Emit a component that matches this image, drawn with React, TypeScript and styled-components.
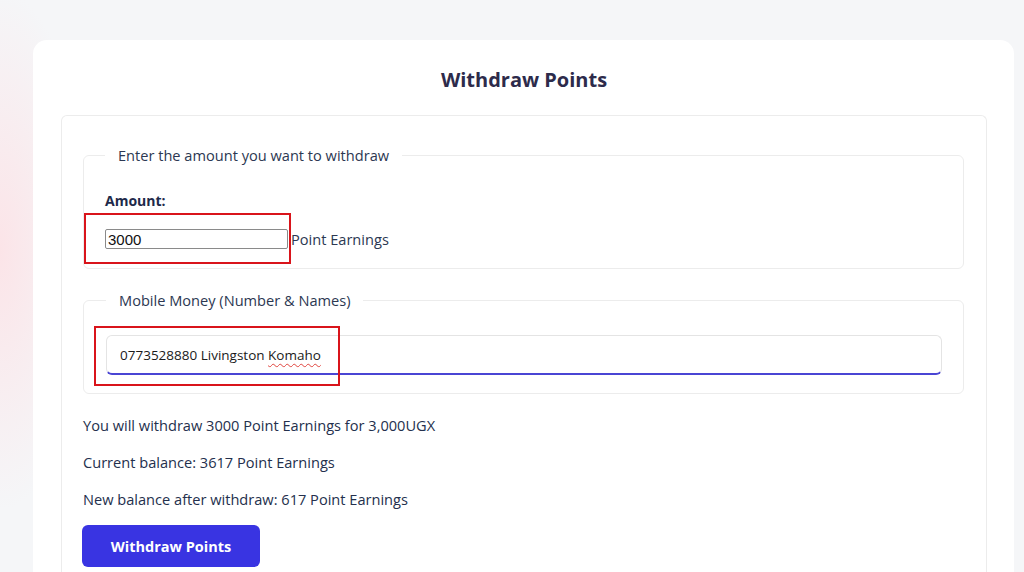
import React from "react";
import styled, { createGlobalStyle } from "styled-components";

const Global = createGlobalStyle`
  html, body { margin: 0; padding: 0; }
  body {
    background-color: #f5f6f8;
    background-image: radial-gradient(ellipse 90px 260px at 0px 250px, rgba(252, 226, 230, 0.9), rgba(245, 246, 248, 0) 100%);
    font-family: "Open Sans", "Noto Sans", sans-serif;
    color: #24304d;
    min-height: 572px;
    overflow: hidden;
  }
`;

const Page = styled.div`
  padding: 40px 10px 0 33px;
  height: 572px;
  box-sizing: border-box;
  overflow: hidden;
`;

const Card = styled.div`
  background: #ffffff;
  border-radius: 14px 14px 0 0;
  padding: 27px 27px 0 28px;
  height: 532px;
  box-sizing: border-box;
  overflow: hidden;
`;

const Title = styled.h2`
  margin: 0;
  text-align: center;
  font-size: 20px;
  font-weight: 700;
  line-height: 26px;
  color: #2d2b4b;
`;

const Panel = styled.div`
  margin-top: 22px;
  border: 1px solid #ececec;
  border-bottom: none;
  border-radius: 6px 6px 0 0;
  padding: 30px 22px 0 21px;
  height: 480px;
`;

const FieldSet = styled.fieldset<{ $gap?: number }>`
  margin: ${(p) => p.$gap ?? 0}px 0 0 0;
  border: 1px solid #ececec;
  border-radius: 6px;
  padding: ${(p) => (p.$gap ? "10px 21px 18px 22px" : "12px 21px 19px 21px")};
  min-width: 0;
`;

const Legend = styled.legend`
  padding: 0 13px;
  font-size: 14.6px;
  line-height: 18px;
  color: #2c3852;
`;

const Label = styled.div`
  font-size: 14px;
  font-weight: 700;
  color: #1e2a4a;
  line-height: 18px;
  margin-top: 16px;
`;

const Row = styled.div`
  display: flex;
  align-items: center;
  margin-top: 19px;
  position: relative;
`;

const NativeInput = styled.input`
  width: 183px;
  height: 20px;
  box-sizing: border-box;
  border: 1px solid #8a8a8a;
  border-radius: 2px;
  padding: 0 2px;
  font-family: "Liberation Sans", Arial, sans-serif;
  font-size: 15px;
  color: #111;
  background: #fff;
  outline: none;
`;

const Suffix = styled.span`
  font-size: 14.6px;
  color: #2c3852;
  margin-left: 3px;
`;

const Annotation = styled.div<{ $l: number; $t: number; $w: number; $h: number }>`
  position: absolute;
  left: ${(p) => p.$l}px;
  top: ${(p) => p.$t}px;
  width: ${(p) => p.$w}px;
  height: ${(p) => p.$h}px;
  border: 2px solid #d9141b;
  box-sizing: border-box;
  pointer-events: none;
`;

const MoneyWrap = styled.div`
  position: relative;
  margin-top: 16px;
`;

const MoneyInput = styled.div`
  height: 40px;
  box-sizing: border-box;
  border: 1px solid #e4e4e4;
  border-bottom: 2px solid #4a45d4;
  border-radius: 6px;
  padding: 0 13px;
  display: flex;
  align-items: center;
  font-family: "Open Sans", "Noto Sans", sans-serif;
  font-size: 13.5px;
  color: #1a1a1a;
`;

const Misspelled = styled.span`
  text-decoration: underline wavy #e0443e;
  text-decoration-thickness: 1px;
  text-underline-offset: 3px;
`;

const Info = styled.p`
  margin: 0;
  font-size: 14.6px;
  line-height: 18px;
  color: #24304d;
  & + & { margin-top: 19px; }
`;

const Infos = styled.div`
  margin-top: 22px;
`;

const Button = styled.button`
  margin-top: 17px;
  margin-left: -1px;
  width: 178px;
  height: 42px;
  border: none;
  border-radius: 6px;
  background: #3934e2;
  color: #ffffff;
  font-family: "Open Sans", "Noto Sans", sans-serif;
  font-size: 14.5px;
  font-weight: 700;
  cursor: pointer;
`;

export default function App() {
  return (
    <>
      <Global />
      <Page>
        <Card>
          <Title>Withdraw Points</Title>
          <Panel>
            <FieldSet>
              <Legend>Enter the amount you want to withdraw</Legend>
              <Label>Amount:</Label>
              <Row>
                <NativeInput defaultValue="3000" />
                <Suffix>Point Earnings</Suffix>
                <Annotation $l={-21} $t={-16} $w={207} $h={51} />
              </Row>
            </FieldSet>
            <FieldSet $gap={22}>
              <Legend>Mobile Money (Number &amp; Names)</Legend>
              <MoneyWrap>
                <MoneyInput>
                  0773528880 Livingston&nbsp;<Misspelled>Komaho</Misspelled>
                </MoneyInput>
                <Annotation $l={-12} $t={-9} $w={246} $h={60} />
              </MoneyWrap>
            </FieldSet>
            <Infos>
              <Info>You will withdraw 3000 Point Earnings for 3,000UGX</Info>
              <Info>Current balance: 3617 Point Earnings</Info>
              <Info>New balance after withdraw: 617 Point Earnings</Info>
            </Infos>
            <Button>Withdraw Points</Button>
          </Panel>
        </Card>
      </Page>
    </>
  );
}
